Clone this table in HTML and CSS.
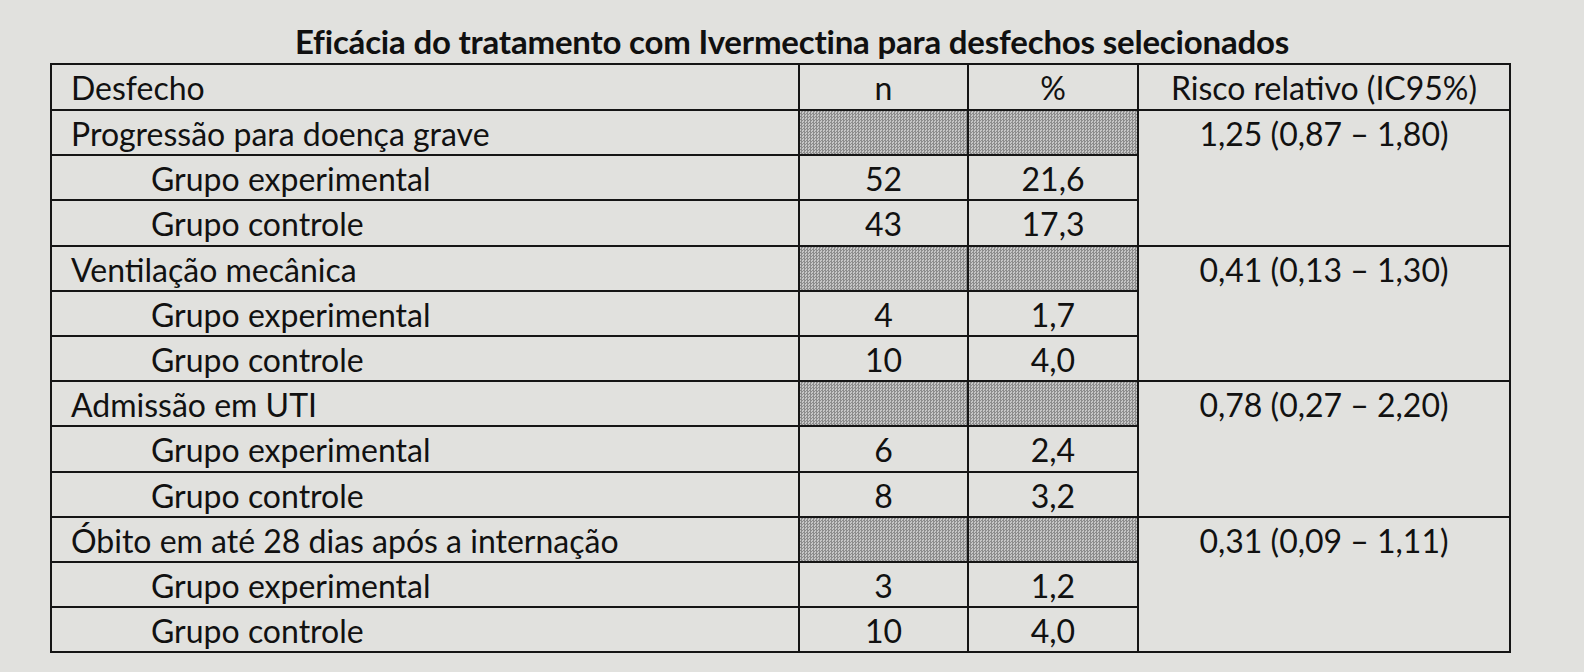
FILE: index.html
```html
<!DOCTYPE html>
<html lang="pt">
<head>
<meta charset="utf-8">
<title>Eficácia do tratamento com Ivermectina</title>
<link rel="stylesheet" href="styles.css">
</head>
<body>
<div class="page">
  <h1 class="title">Eficácia do tratamento com Ivermectina para desfechos selecionados</h1>
  <table class="results">
    <colgroup>
      <col class="c-label">
      <col class="c-n">
      <col class="c-pct">
      <col class="c-rr">
    </colgroup>
    <thead>
      <tr class="row-head">
        <th class="label">Desfecho</th>
        <th class="num">n</th>
        <th class="num">%</th>
        <th class="num">Risco relativo (IC95%)</th>
      </tr>
    </thead>
    <tbody>
      <tr>
        <td class="label">Progressão para doença grave</td>
        <td class="shade"></td>
        <td class="shade"></td>
        <td class="rr" rowspan="3">1,25 (0,87 – 1,80)</td>
      </tr>
      <tr>
        <td class="label sub">Grupo experimental</td>
        <td class="num">52</td>
        <td class="num">21,6</td>
      </tr>
      <tr>
        <td class="label sub">Grupo controle</td>
        <td class="num">43</td>
        <td class="num">17,3</td>
      </tr>
      <tr>
        <td class="label">Ventilação mecânica</td>
        <td class="shade"></td>
        <td class="shade"></td>
        <td class="rr" rowspan="3">0,41 (0,13 – 1,30)</td>
      </tr>
      <tr>
        <td class="label sub">Grupo experimental</td>
        <td class="num">4</td>
        <td class="num">1,7</td>
      </tr>
      <tr>
        <td class="label sub">Grupo controle</td>
        <td class="num">10</td>
        <td class="num">4,0</td>
      </tr>
      <tr>
        <td class="label">Admissão em UTI</td>
        <td class="shade"></td>
        <td class="shade"></td>
        <td class="rr" rowspan="3">0,78 (0,27 – 2,20)</td>
      </tr>
      <tr>
        <td class="label sub">Grupo experimental</td>
        <td class="num">6</td>
        <td class="num">2,4</td>
      </tr>
      <tr>
        <td class="label sub">Grupo controle</td>
        <td class="num">8</td>
        <td class="num">3,2</td>
      </tr>
      <tr>
        <td class="label">Óbito em até 28 dias após a internação</td>
        <td class="shade"></td>
        <td class="shade"></td>
        <td class="rr" rowspan="3">0,31 (0,09 – 1,11)</td>
      </tr>
      <tr>
        <td class="label sub">Grupo experimental</td>
        <td class="num">3</td>
        <td class="num">1,2</td>
      </tr>
      <tr>
        <td class="label sub">Grupo controle</td>
        <td class="num">10</td>
        <td class="num">4,0</td>
      </tr>
    </tbody>
  </table>
</div>
</body>
</html>
```

FILE: styles.css
```css
html, body {
  margin: 0;
  padding: 0;
}

body {
  background: #e1e1de;
  color: #111;
  font-family: Lato, "Open Sans", "Liberation Sans", sans-serif;
  width: 1584px;
  height: 672px;
  overflow: hidden;
}

.page {
  padding-top: 19px;
}

.title {
  margin: 0;
  height: 44px;
  text-align: center;
  font-size: 33px;
  font-weight: 700;
  line-height: 44px;
  letter-spacing: -0.2px;
  color: #101010;
}

.results {
  margin-left: 50px;
  width: 1459px;
  border-collapse: collapse;
  table-layout: fixed;
  font-size: 32px;
  border: 2px solid #111;
}

.c-label { width: 748px; }
.c-n { width: 169px; }
.c-pct { width: 170px; }
.c-rr { width: 372px; }

.results th,
.results td {
  border: 2px solid #151515;
  padding: 2px 19px 0;
  line-height: 41.2px;
  font-weight: 400;
  vertical-align: top;
  white-space: nowrap;
}

.row-head th {
  line-height: 42px;
}

.label {
  text-align: left;
}

.label.sub {
  padding-left: 99px;
}

.num,
.rr {
  text-align: center;
}

.shade {
  background-color: #a9a9a9;
  background-image: repeating-conic-gradient(#8c8c8c 0 25%, #c6c6c6 0 50%);
  background-size: 3px 3px;
}
```
